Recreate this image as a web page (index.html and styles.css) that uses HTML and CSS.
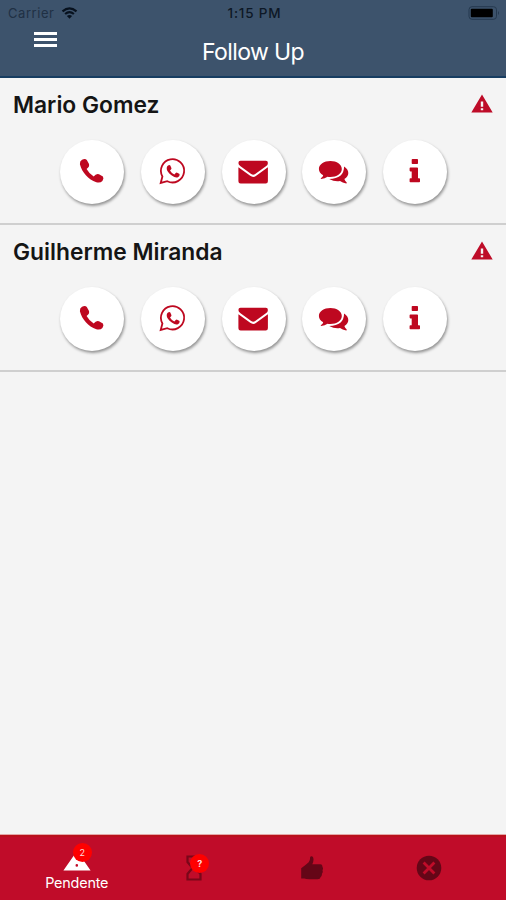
FILE: index.html
```html
<!DOCTYPE html>
<html lang="pt">
<head>
  <meta charset="UTF-8">
  <title>Follow Up</title>
  <link rel="stylesheet" href="styles.css">
</head>
<body>

<!-- icons -->
<svg class="sprite">
	<symbol id="phone" viewBox="0 0 64 64">
		<path d="M22 19.8Q25.2 18.2 26.8 20L29 24Q29.8 26.8 26.6 29Q28.8 33.2 33.7 36.5Q36 33.2 39 34.2L42.9 36.6Q44.2 38.2 42.4 41Q40.2 43.2 36.3 42.2C28.3 39.6 22 32.4 19.9 24.2Q19.6 21.3 22 19.8Z"/>
	</symbol>
	<symbol id="whatsapp" viewBox="0 0 64 64">
		<path class="line" d="M21.4 36.5A11.6 11.6 0 1 1 26.3 41.2L19.7 42.9Z"/>
		<path d="M27 25.5Q28.6 24.5 29.3 25.5L30.5 28.2Q30.6 29.3 29 30.4Q30.6 33.3 33.4 34.5Q34.9 32.5 35.7 32.5L38.6 34Q39 36.2 36.9 37.2Q34.5 38.2 30.8 35.5C27.5 33 25.5 30.6 25.7 28Q25.9 26.4 27 25.5Z"/>
	</symbol>
	<symbol id="mail" viewBox="0 0 64 64">
		<path d="M18.5 20.8H43.9Q45.9 20.8 45.9 22.9Q45.9 25 43.9 26.3L33.2 34Q31.2 35.3 29.2 34L18.5 26.3Q16.4 24.8 16.4 22.9Q16.4 20.8 18.5 20.8Z"/>
		<path d="M16.4 27.2L28.2 35.8Q31.2 38 34.2 35.8L45.9 27.2V41.2Q45.9 43.4 43.7 43.4H18.6Q16.4 43.4 16.4 41.2Z"/>
	</symbol>
	<symbol id="chat" viewBox="0 0 64 64">
		<path d="M28.4 21C34.8 21 39.8 24.3 39.8 29S34.8 37 28.4 37Q26.8 37 25.5 36.7Q23 38.7 19 39.1Q18.4 38.8 19.1 38.1Q21 36.7 21.2 35.2Q16.9 32.8 16.9 29C16.9 24.3 22 21 28.4 21Z"/>
		<path d="M42.1 26.4Q46.3 29 46.3 33Q46.3 36.6 42.4 39.1Q42.8 41 44.7 42.6Q45 43.5 44.2 43.4Q40.5 43 38 41Q32.5 42 27.2 38.9Q42 38.6 42.1 26.4Z"/>
	</symbol>
	<symbol id="info" viewBox="0 0 64 64">
		<path d="M29.5 19H34.2Q35 19 35 19.8V23.2Q35 24 34.2 24H29.5Q28.7 24 28.7 23.2V19.8Q28.7 19 29.5 19ZM27.4 27.4H34.2Q35 27.4 35 28.2V38.2H36.2Q37 38.2 37 39V41.4Q37 42.2 36.2 42.2H27.4Q26.6 42.2 26.6 41.4V39Q26.6 38.2 27.4 38.2H28.7V31.4H27.4Q26.6 31.4 26.6 30.6V28.2Q26.6 27.4 27.4 27.4Z"/>
	</symbol>
	<symbol id="warning" viewBox="0 0 22 19">
		<path fill-rule="evenodd" d="M11 .5L21.7 18.5H.3ZM9.8 7.5V12.8H12.2V7.5ZM9.8 14.2V16.3H12.2V14.2Z"/>
	</symbol>
</svg>

<header class="header">
	<div class="status">
		<div class="carrier">Carrier
			<svg class="wifi" viewBox="0 0 16 12">
				<path d="M1 4.3Q8-1.7 15 4.3M3.6 7Q8 3.3 12.4 7"/>
				<path class="dot" d="M5.4 9Q8 7 10.6 9L8 11.8Z"/>
			</svg>
		</div>
		<div class="time">1:15 PM</div>
		<svg class="battery" viewBox="0 0 33 14">
			<rect class="case" x="1" y=".7" width="27.5" height="12.6" rx="3"/>
			<rect x="2.8" y="2.8" width="22" height="8.5" rx="1"/>
			<path class="cap" d="M30 5Q32 7 30 9Z"/>
		</svg>
	</div>
	<div class="titlebar">
		<div class="menu"><span></span><span></span><span></span></div>
		<div class="title">Follow Up</div>
	</div>
</header>

<main class="lista">
	<section class="contato">
		<div class="nome">
			<span>Mario Gomez</span>
			<svg class="alerta"><use href="#warning"/></svg>
		</div>
		<div class="botoes">
			<a class="botao"><svg><use href="#phone"/></svg></a>
			<a class="botao"><svg><use href="#whatsapp"/></svg></a>
			<a class="botao"><svg><use href="#mail"/></svg></a>
			<a class="botao"><svg><use href="#chat"/></svg></a>
			<a class="botao"><svg><use href="#info"/></svg></a>
		</div>
	</section>
	<section class="contato">
		<div class="nome">
			<span>Guilherme Miranda</span>
			<svg class="alerta"><use href="#warning"/></svg>
		</div>
		<div class="botoes">
			<a class="botao"><svg><use href="#phone"/></svg></a>
			<a class="botao"><svg><use href="#whatsapp"/></svg></a>
			<a class="botao"><svg><use href="#mail"/></svg></a>
			<a class="botao"><svg><use href="#chat"/></svg></a>
			<a class="botao"><svg><use href="#info"/></svg></a>
		</div>
	</section>
</main>

<nav class="tabs">
	<div class="tab active">
		<div class="icon">
			<svg class="triangle" viewBox="0 0 28 20">
				<path fill-rule="evenodd" d="M14 0L27.6 19.5H.4ZM13.8 13.1A1.3 1.3 0 1 0 13.8 15.7A1.3 1.3 0 1 0 13.8 13.1Z"/>
			</svg>
			<span class="badge">2</span>
		</div>
		<span class="label">Pendente</span>
	</div>
	<div class="tab">
		<div class="icon">
			<svg class="hourglass" viewBox="0 0 16 26">
				<path d="M1.5 1.5H14.5V7L9.5 13L14.5 19V24.5H1.5V19L6.5 13L1.5 7Z"/>
			</svg>
			<span class="badge">?</span>
		</div>
	</div>
	<div class="tab">
		<svg class="thumb" viewBox="0 0 24 24">
			<path d="M10.7.4Q13.3-.2 13.5 3.2Q13.6 6 12.3 8.2H20.4Q22.6 8.2 22.4 10.7Q23.6 12.4 22.5 14.3Q23.3 16.3 21.9 17.8Q22.2 20 20.5 21.2Q20.4 23.2 17.6 23.2H9.5Q6 23.1 4.3 22.4H1.2V12.2Q5.2 9.5 8.7 6.3Q10.3 4.3 10.1 1Z"/>
		</svg>
	</div>
	<div class="tab">
		<svg class="close" viewBox="0 0 26 26">
			<circle cx="13" cy="13" r="12.3"/>
			<path d="M7.6 7.6L18.4 18.4M18.4 7.6L7.6 18.4"/>
		</svg>
	</div>
</nav>

</body>
</html>
```
FILE: styles.css
```css
*{
	box-sizing: border-box;
}
body{
	margin: 0;
	height: 100vh;
	display: flex;
	flex-direction: column;
	font-family: Inter, "Liberation Sans", sans-serif;
	background: #f4f4f4;
}
svg{
	display: block;
}
.sprite{
	display: none;
}

/* header */
.header{
	height: 78px;
	background: #3d536c;
	border-bottom: 2px solid #173d61;
}
.status{
	display: grid;
	grid-template-columns: 1fr 60px 1fr;
	align-items: center;
	height: 26px;
	padding: 0 5px 0 8px;
	font-size: 13px;
	color: #0d1826;
}
.carrier{
	display: flex;
	align-items: center;
	gap: 7px;
	color: #203044;
	letter-spacing: .55px;
}
.wifi{
	width: 17px;
	height: 12px;
	fill: none;
	stroke: #07111e;
	stroke-width: 2.2;
}
.wifi .dot{
	fill: #07111e;
	stroke: none;
}
.time{
	text-align: center;
	font-size: 13.5px;
	font-weight: 500;
	letter-spacing: .8px;
	white-space: nowrap;
}
.battery{
	width: 33px;
	height: 14px;
	justify-self: end;
}
.battery .case{
	fill: none;
	stroke: #25394f;
}
.battery .cap{
	fill: #25394f;
}
.titlebar{
	display: grid;
	grid-template-columns: 1fr auto 1fr;
	height: 50px;
	padding-left: 34px;
	padding-right: 34px;
}
.menu{
	display: flex;
	flex-direction: column;
	gap: 3px;
	padding-top: 6px;
}
.menu span{
	width: 23px;
	height: 3px;
	background: #fff;
}
.title{
	padding-top: 11px;
	font-size: 23px;
	line-height: 30px;
	letter-spacing: -.6px;
	color: #fff;
}

/* contacts */
.lista{
	flex: 1;
}
.contato{
	height: 147px;
	padding-top: 11px;
	border-bottom: 2px solid #cfcfcf;
}
.nome{
	display: flex;
	justify-content: space-between;
	height: 32px;
	padding: 0 13px;
	font-size: 22.8px;
	line-height: 32px;
	font-weight: 600;
	color: #151515;
}
.alerta{
	width: 22px;
	height: 19px;
	margin-top: 5px;
	fill: #be0c28;
}
.botoes{
	display: flex;
	justify-content: center;
	gap: 16.7px;
	margin-top: 19px;
	padding-left: 1px;
}
.botao{
	width: 64px;
	height: 64px;
	border-radius: 50%;
	background: #fff;
	box-shadow: 1px 2px 3px rgba(0, 0, 0, .4);
}
.botao svg{
	width: 64px;
	height: 64px;
	fill: #be0820;
}
.line{
	fill: none;
	stroke: #be0820;
	stroke-width: 1.8;
}

/* bottom tabs */
.tabs{
	display: grid;
	grid-template-columns: repeat(4, 1fr);
	height: 65px;
	padding: 0 18px;
	background: #c00c29;
	border-top: 2px solid #b9101b;
	box-shadow: 0 -1px 0 #e3a8a8;
}
.tab{
	display: flex;
	flex-direction: column;
	align-items: center;
	justify-content: center;
	padding-bottom: 2px;
	color: #650617;
}
.active{
	justify-content: flex-start;
	padding-top: 14px;
	color: #fff;
}
.icon{
	position: relative;
}
.triangle{
	width: 28px;
	height: 20px;
	fill: #fff;
}
.hourglass{
	width: 16px;
	height: 26px;
	fill: none;
	stroke: #790719;
	stroke-width: 2.2;
}
.thumb{
	width: 24px;
	height: 24px;
	fill: #650617;
}
.close{
	width: 26px;
	height: 26px;
	fill: #650617;
}
.close path{
	stroke: #c00c29;
	stroke-width: 2.8;
}
.badge{
	position: absolute;
	top: -8px;
	left: 10px;
	width: 19px;
	height: 19px;
	border-radius: 50%;
	background: #fe0000;
	color: #ffdcdc;
	font-size: 9px;
	line-height: 19px;
	text-align: center;
}
.hourglass + .badge{
	top: -1px;
	left: 4px;
	font-weight: 700;
}
.label{
	margin-top: 3px;
	font-size: 14.4px;
	line-height: 18px;
	letter-spacing: -.2px;
}
```
